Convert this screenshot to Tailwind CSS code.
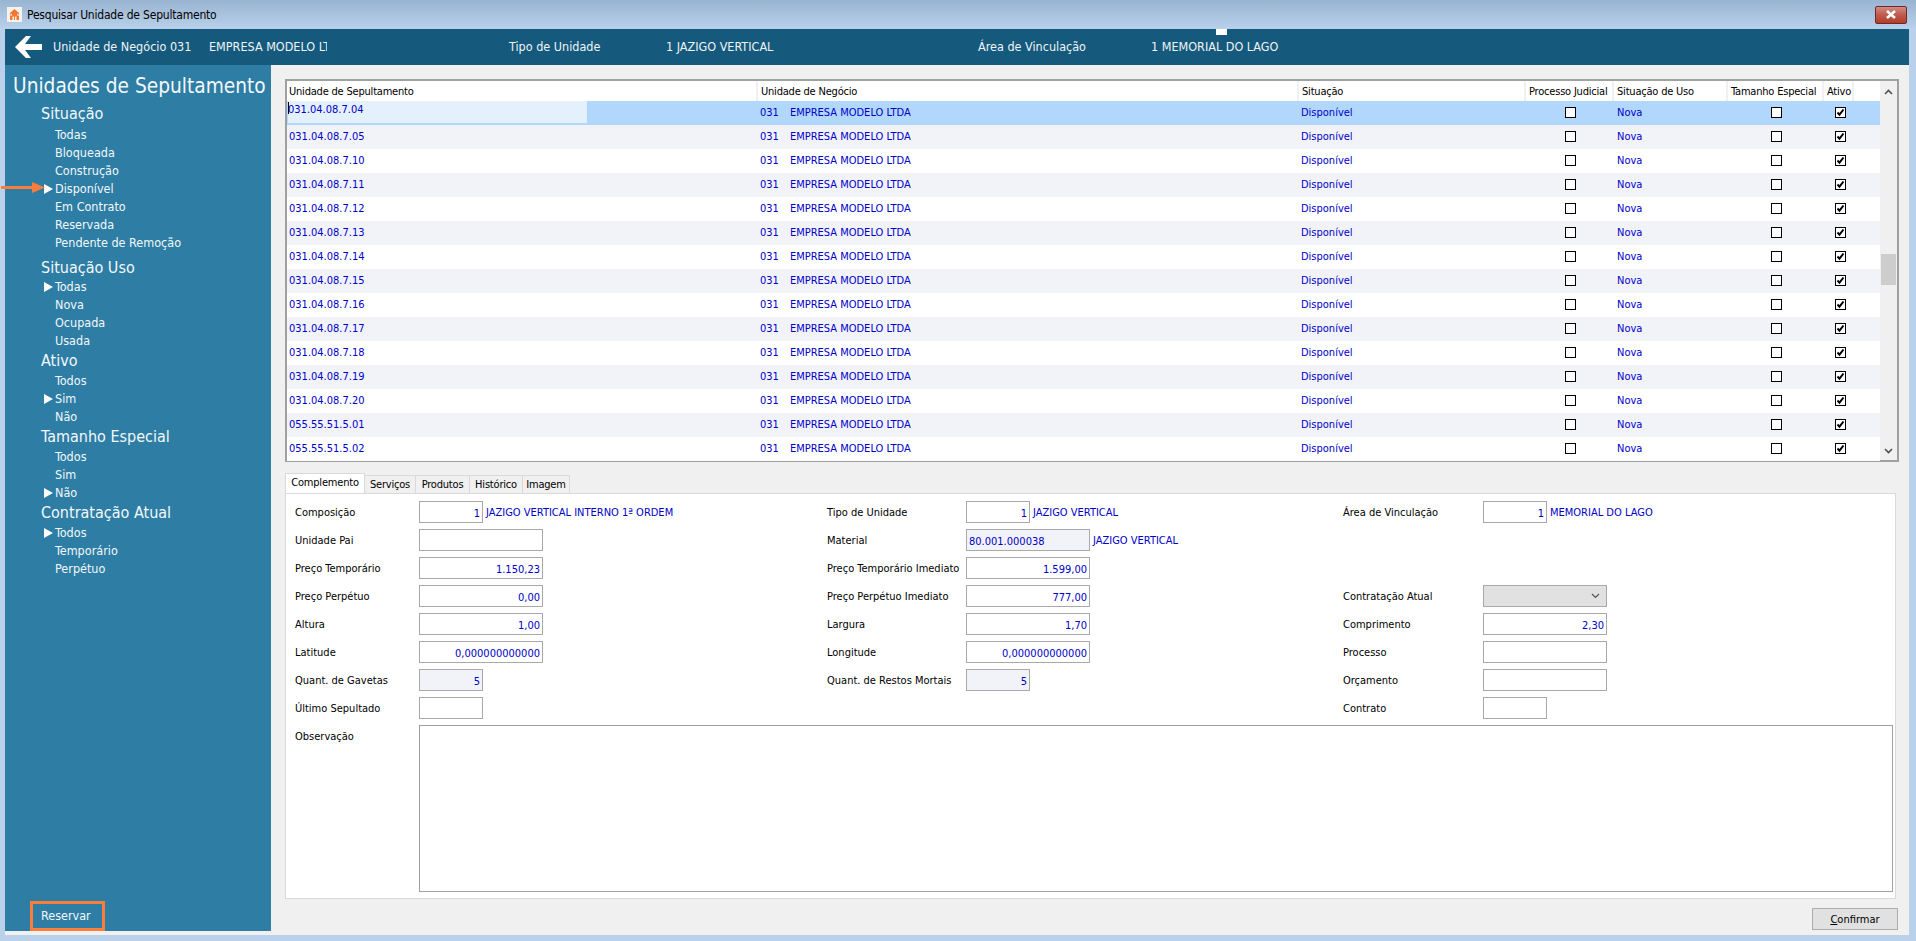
<!DOCTYPE html>
<html lang="pt-BR">
<head>
    <meta charset="UTF-8">
    <title>Pesquisar Unidade de Sepultamento</title>
    <script src="https://cdn.jsdelivr.net/npm/@tailwindcss/browser@4"></script>
</head>
<body class="w-[1916px] h-[941px] overflow-hidden relative bg-[#b9d1ea] font-['DejaVu_Sans'] font-stretch-condensed text-[11px] leading-none text-black">
    <!-- title bar -->
    <div class="h-[29px] flex items-center bg-gradient-to-b from-[#99b4d1] to-[#b9d1ea] pl-[7px] pr-[9px]">
        <svg class="w-[15px] h-[15px] mr-[5px]" viewBox="0 0 15 15"><rect width="15" height="15" fill="#f6f3ee"/><path d="M3 6l4.500-4 4.500 4v2l-2-1.500v2h2V13H9.500V9.500H8V13H7V9.500H5.500V13H3V8.500h2v-2L3 8z" fill="#f4772e"/></svg>
        <span class="text-[12px] text-black tracking-[-0.2px]">Pesquisar Unidade de Sepultamento</span>
        <div class="ml-auto w-[32px] h-[18px] rounded-[2px] border border-[#6f2a28] bg-gradient-to-b from-[#d08a82] via-[#c05a4c] to-[#b23c28] flex items-center justify-center">
            <svg class="w-[12px] h-[9px]" viewBox="0 0 12 9"><path d="M2 1l8 7M10 1L2 8" stroke="#fff" stroke-width="2.600"/></svg>
        </div>
    </div>

    <div class="w-[1904px] ml-[5px] h-[906px] bg-[#f0f0f0] flex flex-col">
        <!-- top info bar -->
        <div class="h-[36px] bg-[#155a7c] text-[#eef4f8] text-[12.500px] relative flex items-center shrink-0">
            <svg class="w-[27px] h-[22px] ml-[10px] mr-[11px]" viewBox="0 0 27 22"><path d="M11 0L0 11l11 11h5l-6-8h17V8H10l6-8z" fill="#fff"/></svg>
            <span class="w-[156px] whitespace-nowrap">Unidade de Negócio 031</span>
            <span class="w-[118px] mr-[1px] overflow-hidden whitespace-nowrap">EMPRESA MODELO LTDA</span>
            <span class="ml-[181px] w-[157px]">Tipo de Unidade</span>
            <span class="w-[312px]">1 JAZIGO VERTICAL</span>
            <span class="w-[173px]">Área de Vinculação</span>
            <span>1 MEMORIAL DO LAGO</span>
            <div class="absolute left-[1211px] top-0 w-[11px] h-[6px] bg-white"></div>
        </div>

        <div class="flex flex-1 min-h-0">
            <!-- sidebar -->
            <aside class="w-[266px] h-[866px] bg-[#2e7da4] text-[#f2f8fb] flex flex-col shrink-0">
                <h1 class="ml-[8px] mt-[7px] mb-[3px] h-[28px] flex items-center text-[20.700px] whitespace-nowrap">Unidades de Sepultamento</h1>
                <div id="filters"></div>
                <div class="mt-auto ml-[25px] w-[75px] h-[30px] border-[3px] border-[#fb7d3c] flex items-center pl-[8px] text-[12.500px]">Reservar</div>
            </aside>

            <main class="flex-1 min-w-0 pl-[14px]">
                <!-- results grid -->
                <div class="mt-[14px] w-[1614px] h-[383px] border-2 border-[#a0a0a0] bg-white flex">
                    <div class="w-[1593px] shrink-0">
                        <div class="h-[20px] grid grid-cols-[471px_541px_227px_88px_114px_96px_30px_26px] items-center text-black tracking-[-0.2px]">
                            <div class="pl-[2px] h-full flex items-center border-r-2 border-[#f0f0f0]">Unidade de Sepultamento</div>
                            <div class="pl-[3px] h-full flex items-center border-r-2 border-[#f0f0f0]">Unidade de Negócio</div>
                            <div class="pl-[3px] h-full flex items-center border-r-2 border-[#f0f0f0]">Situação</div>
                            <div class="pl-[3px] h-full flex items-center border-r-2 border-[#f0f0f0] whitespace-nowrap">Processo Judicial</div>
                            <div class="pl-[3px] h-full flex items-center border-r-2 border-[#f0f0f0]">Situação de Uso</div>
                            <div class="pl-[3px] h-full flex items-center border-r-2 border-[#f0f0f0] whitespace-nowrap">Tamanho Especial</div>
                            <div class="pl-[3px] h-full flex items-center border-r-2 border-[#f0f0f0]">Ativo</div>
                            <div></div>
                        </div>
                        <div id="rows"></div>
                    </div>
                    <!-- scrollbar -->
                    <div class="w-[17px] h-full bg-[#f0f0f0] flex flex-col items-center relative">
                        <svg class="w-[9px] h-[6px] mt-[8px]" viewBox="0 0 9 6"><path d="M1 5l3.500-3.500L8 5" fill="none" stroke="#505050" stroke-width="1.600"/></svg>
                        <div class="w-[15px] h-[31px] bg-[#cdcdcd] mt-[159px]"></div>
                        <svg class="w-[9px] h-[6px] mt-auto mb-[6px]" viewBox="0 0 9 6"><path d="M1 1l3.500 3.500L8 1" fill="none" stroke="#505050" stroke-width="1.600"/></svg>
                    </div>
                </div>

                <!-- tabs -->
                <div class="mt-[11px] h-[20px] flex items-end relative z-10 tracking-[-0.2px]">
                    <div class="w-[80px] h-[20px] bg-white border border-b-0 border-[#d9d9d9] flex items-center justify-center pb-[2px]">Complemento</div>
                    <div class="w-[51px] h-[18px] border-r border-t border-[#d9d9d9] flex items-center justify-center">Serviços</div>
                    <div class="w-[54px] h-[18px] border-r border-t border-[#d9d9d9] flex items-center justify-center">Produtos</div>
                    <div class="w-[53px] h-[18px] border-r border-t border-[#d9d9d9] flex items-center justify-center">Histórico</div>
                    <div class="w-[47px] h-[18px] border-r border-t border-[#d9d9d9] flex items-center justify-center">Imagem</div>
                </div>

                <!-- complemento panel -->
                <div class="w-[1611px] h-[406px] bg-white border border-[#d9d9d9] pt-[7px] pl-[9px]">
                    <div id="form" class="grid grid-cols-[532px_516px_1fr] auto-rows-[28px]"></div>
                    <div class="flex">
                        <span class="w-[124px] pt-[6px]">Observação</span>
                        <div class="w-[1474px] h-[167px] border border-[#a0a0a0]"></div>
                    </div>
                </div>

                <div class="w-[1613px] flex justify-end mt-[9px]">
                    <div class="w-[86px] h-[22px] bg-[#e1e1e1] border border-[#adadad] flex items-center justify-center"><span><span class="underline">C</span>onfirmar</span></div>
                </div>
            </main>
        </div>
    </div>

    <!-- annotation arrow -->
    <svg class="absolute left-[1px] top-[182px] w-[44px] h-[11px]" viewBox="0 0 44 11"><path d="M0 5.500h32" stroke="#fb7d3c" stroke-width="3"/><path d="M31 0l13 5.500L31 11z" fill="#fb7d3c"/></svg>

    <script>
        const groups = [
            { title: 'Situação', extra: 'mb-[1px]', items: ['Todas', 'Bloqueada', 'Construção', 'Disponível', 'Em Contrato', 'Reservada', 'Pendente de Remoção'], on: 3 },
            { title: 'Situação Uso', extra: 'mt-[5px] -mb-px', items: ['Todas', 'Nova', 'Ocupada', 'Usada'], on: 0 },
            { title: 'Ativo', extra: '', items: ['Todos', 'Sim', 'Não'], on: 1 },
            { title: 'Tamanho Especial', extra: '', items: ['Todos', 'Sim', 'Não'], on: 2 },
            { title: 'Contratação Atual', extra: '', items: ['Todos', 'Temporário', 'Perpétuo'], on: 0 }
        ];

        document.getElementById('filters').innerHTML = groups.map(g => `
            <div class="ml-[36px] h-[22px] flex items-center text-[16px] ${g.extra}">${g.title}</div>
            ${g.items.map((item, i) => `
                <div class="h-[18px] flex items-center text-[12.500px] pl-[39px] relative">
                    ${i === g.on ? '<svg class="absolute left-[39px] w-[9px] h-[10px]" viewBox="0 0 9 10"><path d="M0 0l9 5-9 5z" fill="#fff"/></svg>' : ''}
                    <span class="ml-[11px]">${item}</span>
                </div>`).join('')}
        `).join('');

        const codes = ['031.04.08.7.04', '031.04.08.7.05', '031.04.08.7.10', '031.04.08.7.11', '031.04.08.7.12', '031.04.08.7.13', '031.04.08.7.14', '031.04.08.7.15', '031.04.08.7.16', '031.04.08.7.17', '031.04.08.7.18', '031.04.08.7.19', '031.04.08.7.20', '055.55.51.5.01', '055.55.51.5.02'];

        const box = '<div class="w-[11px] h-[11px] border border-black bg-white"></div>';
        const checked = '<div class="w-[11px] h-[11px] border border-black bg-white"><svg class="w-[9px] h-[9px]" viewBox="0 0 9 9"><path d="M1.500 4.500l2 2.200L7.500 1.500" fill="none" stroke="#000" stroke-width="2"/></svg></div>';

        document.getElementById('rows').innerHTML = codes.map((code, i) => {
            const bg = i === 0 ? 'bg-[#b1d7fd]' : i % 2 ? 'bg-[#f2f3f9]' : 'bg-white';
            const first = i === 0
                ? `<div class="w-[299px] h-[22px] self-start ml-[1px] bg-[#e4f0fc] pt-[3px] relative"><div class="absolute left-0 top-[1px] w-px h-[12px] bg-black"></div>${code}</div>`
                : `<div class="pl-[2px]">${code}</div>`;
            return `
                <div class="h-[24px] pb-[2px] grid grid-cols-[471px_541px_227px_88px_114px_96px_30px_26px] items-center text-[#0000c8] ${bg}">
                    ${first}
                    <div class="pl-[2px]"><span class="mr-[11px]">031</span>EMPRESA MODELO LTDA</div>
                    <div class="pl-[2px]">Disponível</div>
                    <div class="flex justify-center">${box}</div>
                    <div class="pl-[3px]">Nova</div>
                    <div class="flex justify-center">${box}</div>
                    <div class="flex justify-center pl-[2px]">${checked}</div>
                    <div></div>
                </div>`;
        }).join('');

        // label, value, input size, extra text
        const fields = [
            ['Composição', '1', 's', 'JAZIGO VERTICAL INTERNO 1ª ORDEM'], ['Tipo de Unidade', '1', 's', 'JAZIGO VERTICAL'], ['Área de Vinculação', '1', 's', 'MEMORIAL DO LAGO'],
            ['Unidade Pai', '', 'l'], ['Material', '80.001.000038', 'm', 'JAZIGO VERTICAL'], null,
            ['Preço Temporário', '1.150,23', 'l'], ['Preço Temporário Imediato', '1.599,00', 'l'], null,
            ['Preço Perpétuo', '0,00', 'l'], ['Preço Perpétuo Imediato', '777,00', 'l'], ['Contratação Atual', '', 'c'],
            ['Altura', '1,00', 'l'], ['Largura', '1,70', 'l'], ['Comprimento', '2,30', 'l'],
            ['Latitude', '0,000000000000', 'l'], ['Longitude', '0,000000000000', 'l'], ['Processo', '', 'l'],
            ['Quant. de Gavetas', '5', 'g'], ['Quant. de Restos Mortais', '5', 'g'], ['Orçamento', '', 'l'],
            ['Último Sepultado', '', 's'], null, ['Contrato', '', 's']
        ];
        const labelWidth = ['w-[124px]', 'w-[139px]', 'w-[140px]'];
        const inputClass = {
            s: 'w-[64px] bg-white justify-end pr-[2px] pt-[2px]',
            l: 'w-[124px] bg-white justify-end pr-[2px] pt-[2px]',
            g: 'w-[64px] bg-[#f2f3f9] justify-end pr-[2px] pt-[2px]',
            m: 'w-[124px] bg-[#f2f3f9] pl-[2px] pt-[2px]',
            c: 'w-[124px] bg-[#e1e1e1] justify-end pr-[6px]'
        };
        const chevron = '<svg class="w-[9px] h-[6px]" viewBox="0 0 9 6"><path d="M1 1l3.500 3.500L8 1" fill="none" stroke="#555" stroke-width="1.200"/></svg>';

        document.getElementById('form').innerHTML = fields.map((f, i) => {
            if (!f) return '<div></div>';
            return `
                <div class="flex items-start">
                    <span class="${labelWidth[i % 3]} pt-[6px] whitespace-nowrap">${f[0]}</span>
                    <div class="h-[22px] border border-[#a9a9a9] flex items-center text-[#0000c8] ${inputClass[f[2]]}">${f[2] === 'c' ? chevron : f[1]}</div>
                    ${f[3] ? `<span class="ml-[3px] pt-[6px] text-[#0000c8] whitespace-nowrap">${f[3]}</span>` : ''}
                </div>`;
        }).join('');
    </script>
</body>
</html>
